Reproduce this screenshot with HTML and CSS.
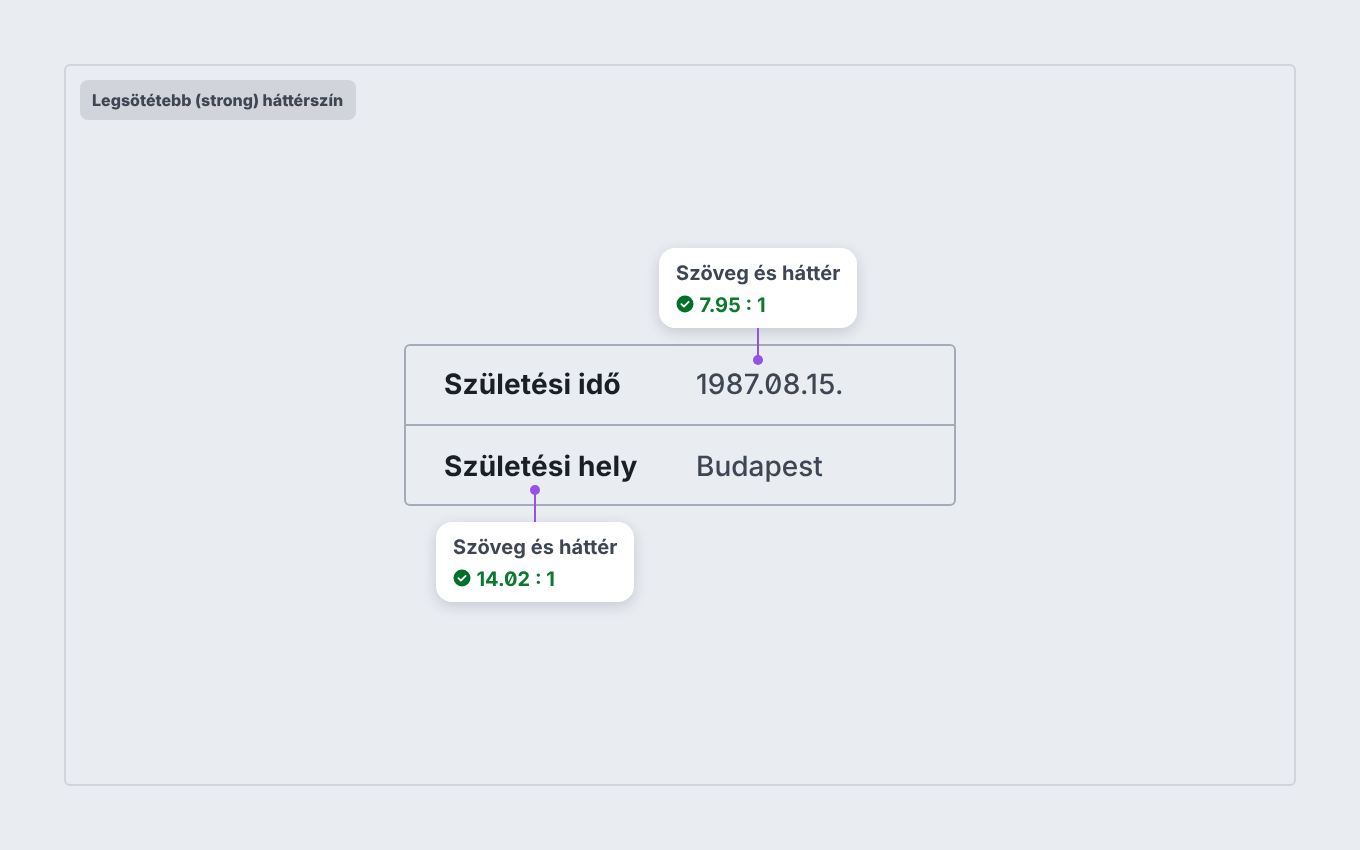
FILE: index.html
```html
<!DOCTYPE html>
<html lang="hu">
<head>
<meta charset="utf-8">
<title>Legsötétebb háttérszín</title>
<link rel="stylesheet" href="styles.css">
</head>
<body>
<main class="frame">
  <div class="badge">Legsötétebb (strong) háttérszín</div>
  <div class="stage">
    <div class="table">
      <div class="row">
        <div class="term">Születési idő</div>
        <div class="value value-date">1987.08.15.</div>
      </div>
      <div class="row">
        <div class="term">Születési hely</div>
        <div class="value">Budapest</div>
      </div>
      <div class="note note-top">
        <div class="note-title">Szöveg és háttér</div>
        <div class="note-ratio">
          <svg class="check" viewBox="0 0 18 18" aria-hidden="true"><circle cx="9" cy="9" r="8.5" fill="#00702a"/><path d="M5.4 9.2l2.5 2.4 4.7-4.8" fill="none" stroke="#fff" stroke-width="1.8" stroke-linecap="round" stroke-linejoin="round"/></svg>
          <span>7.95 : 1</span>
        </div>
        <span class="stem stem-down"></span>
      </div>
      <div class="note note-bottom">
        <div class="note-title">Szöveg és háttér</div>
        <div class="note-ratio">
          <svg class="check" viewBox="0 0 18 18" aria-hidden="true"><circle cx="9" cy="9" r="8.5" fill="#00702a"/><path d="M5.4 9.2l2.5 2.4 4.7-4.8" fill="none" stroke="#fff" stroke-width="1.8" stroke-linecap="round" stroke-linejoin="round"/></svg>
          <span>14.02 : 1</span>
        </div>
        <span class="stem stem-up"></span>
      </div>
    </div>
  </div>
</main>
</body>
</html>
```
FILE: styles.css
```css
* { box-sizing: border-box; }
html, body { margin: 0; height: 100%; }
body {
  background: #e9ecf1;
  padding: 64px;
  font-family: Inter, "Liberation Sans", sans-serif;
  color: #3e4553;
  text-rendering: geometricPrecision;
}
.frame {
  height: 722px;
  border: 2px solid #d1d5db;
  border-radius: 6px;
  padding: 14px;
  display: flex;
  flex-direction: column;
  align-items: flex-start;
  will-change: transform;
}
.badge {
  width: 276px;
  height: 40px;
  padding: 0 12px;
  display: flex;
  align-items: center;
  background: #d1d5db;
  border-radius: 8px;
  font-size: 16px;
  font-weight: 800;
  color: #3e4553;
  white-space: nowrap;
}
.stage {
  flex: 1;
  align-self: stretch;
  display: flex;
  justify-content: center;
  padding-top: 224px;
}
.table {
  position: relative;
  width: 552px;
  height: 162px;
  border: 2px solid #a5aab8;
  border-radius: 6px;
}
.row {
  height: 78px;
  padding-bottom: 2px;
  display: flex;
  align-items: center;
  padding-left: 38px;
  font-size: 28px;
  line-height: 40px;
}
.row + .row { height: 80px; padding-bottom: 0; padding-top: 2px; border-top: 2px solid #a5aab8; }
.term {
  width: 252px;
  font-weight: 700;
  letter-spacing: 0.14px;
  color: #1a1e25;
}
.value {
  font-weight: 500;
  color: #3e4553;
  font-feature-settings: "zero" 1;
}
.value-date { letter-spacing: 0.25px; }
.note {
  position: absolute;
  width: 198px;
  height: 80px;
  padding: 13px 17px;
  background: #fff;
  border-radius: 16px;
  box-shadow: 0 4px 14px rgba(30, 40, 60, 0.17);
}
.note-top { left: 253px; top: -98px; }
.note-bottom { left: 30px; top: 176px; }
.note-title {
  font-size: 20px;
  line-height: 24px;
  font-weight: 700;
  letter-spacing: 0.12px;
  color: #3e4553;
  white-space: nowrap;
}
.note-ratio {
  display: flex;
  align-items: center;
  gap: 5.5px;
  margin-top: 8px;
  font-size: 20px;
  line-height: 24px;
  font-weight: 700;
  color: #0a7a2f;
  font-feature-settings: "zero" 1;
  white-space: nowrap;
}
.check { width: 18px; height: 18px; flex: none; margin-bottom: 2px; }
.stem {
  position: absolute;
  left: 98px;
  width: 2px;
  background: #9353e8;
}
.stem::after {
  content: "";
  position: absolute;
  left: -4px;
  width: 10px;
  height: 10px;
  border-radius: 50%;
  background: #9353e8;
}
.stem-down { top: 80px; height: 32px; }
.stem-down::after { bottom: -5px; }
.stem-up { bottom: 80px; height: 32px; }
.stem-up::after { top: -5px; }
```
